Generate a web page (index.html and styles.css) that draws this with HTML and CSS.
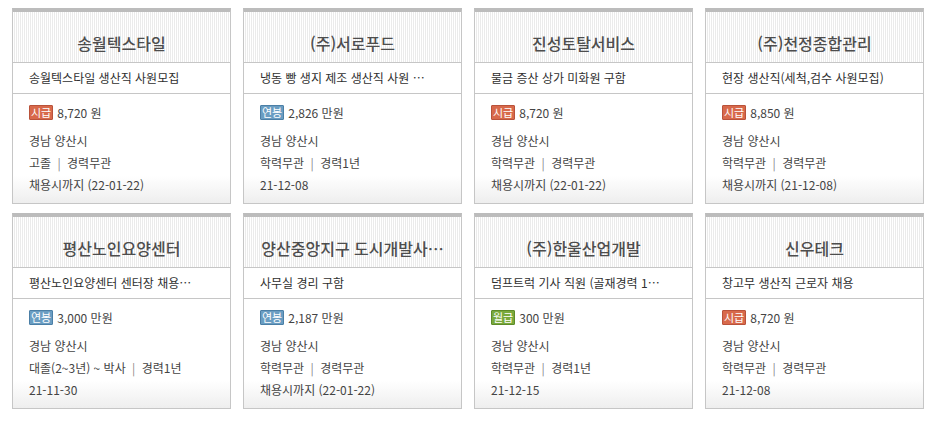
FILE: index.html
```html
<!DOCTYPE html>
<html lang="ko">
<head>
<meta charset="utf-8">
<title>채용정보</title>
<link rel="stylesheet" href="styles.css">
</head>
<body>
<div class="grid">
  <div class="card">
    <div class="card-head">송월텍스타일</div>
    <div class="card-sub">송월텍스타일 생산직 사원모집</div>
    <div class="card-body">
      <div class="pay"><span class="badge hourly">시급</span><span class="amount">8,720 원</span></div>
      <div class="line">경남 양산시</div>
      <div class="line">고졸 <span class="sep">|</span> 경력무관</div>
      <div class="line">채용시까지 (22-01-22)</div>
    </div>
  </div>
  <div class="card">
    <div class="card-head">(주)서로푸드</div>
    <div class="card-sub">냉동 빵 생지 제조 생산직 사원 …</div>
    <div class="card-body">
      <div class="pay"><span class="badge yearly">연봉</span><span class="amount">2,826 만원</span></div>
      <div class="line">경남 양산시</div>
      <div class="line">학력무관 <span class="sep">|</span> 경력1년</div>
      <div class="line">21-12-08</div>
    </div>
  </div>
  <div class="card">
    <div class="card-head">진성토탈서비스</div>
    <div class="card-sub">물금 증산 상가 미화원 구함</div>
    <div class="card-body">
      <div class="pay"><span class="badge hourly">시급</span><span class="amount">8,720 원</span></div>
      <div class="line">경남 양산시</div>
      <div class="line">학력무관 <span class="sep">|</span> 경력무관</div>
      <div class="line">채용시까지 (22-01-22)</div>
    </div>
  </div>
  <div class="card">
    <div class="card-head">(주)천정종합관리</div>
    <div class="card-sub">현장 생산직(세척,검수 사원모집)</div>
    <div class="card-body">
      <div class="pay"><span class="badge hourly">시급</span><span class="amount">8,850 원</span></div>
      <div class="line">경남 양산시</div>
      <div class="line">학력무관 <span class="sep">|</span> 경력무관</div>
      <div class="line">채용시까지 (21-12-08)</div>
    </div>
  </div>
  <div class="card">
    <div class="card-head">평산노인요양센터</div>
    <div class="card-sub">평산노인요양센터 센터장 채용…</div>
    <div class="card-body">
      <div class="pay"><span class="badge yearly">연봉</span><span class="amount">3,000 만원</span></div>
      <div class="line">경남 양산시</div>
      <div class="line">대졸(2~3년) ~ 박사 <span class="sep">|</span> 경력1년</div>
      <div class="line">21-11-30</div>
    </div>
  </div>
  <div class="card">
    <div class="card-head">양산중앙지구 도시개발사…</div>
    <div class="card-sub">사무실 경리 구함</div>
    <div class="card-body">
      <div class="pay"><span class="badge yearly">연봉</span><span class="amount">2,187 만원</span></div>
      <div class="line">경남 양산시</div>
      <div class="line">학력무관 <span class="sep">|</span> 경력무관</div>
      <div class="line">채용시까지 (22-01-22)</div>
    </div>
  </div>
  <div class="card">
    <div class="card-head">(주)한울산업개발</div>
    <div class="card-sub">덤프트럭 기사 직원 (골재경력 1…</div>
    <div class="card-body">
      <div class="pay"><span class="badge monthly">월급</span><span class="amount">300 만원</span></div>
      <div class="line">경남 양산시</div>
      <div class="line">학력무관 <span class="sep">|</span> 경력1년</div>
      <div class="line">21-12-15</div>
    </div>
  </div>
  <div class="card">
    <div class="card-head">신우테크</div>
    <div class="card-sub">창고무 생산직 근로자 채용</div>
    <div class="card-body">
      <div class="pay"><span class="badge hourly">시급</span><span class="amount">8,720 원</span></div>
      <div class="line">경남 양산시</div>
      <div class="line">학력무관 <span class="sep">|</span> 경력무관</div>
      <div class="line">21-12-08</div>
    </div>
  </div>
</div>
</body>
</html>
```
FILE: styles.css
```css
html, body {
  margin: 0;
  padding: 0;
  background: #fff;
}
body {
  font-family: "Noto Sans CJK KR", "Noto Sans", sans-serif;
  font-size: 12px;
  color: #444;
}
.grid {
  display: grid;
  grid-template-columns: repeat(4, 219px);
  column-gap: 12px;
  row-gap: 9px;
  padding: 8px 0 0 12px;
}
.card {
  border: 1px solid #c6c6c6;
  border-top: 4px solid #bcbcbc;
  display: flex;
  flex-direction: column;
}
.card-head {
  height: 51px;
  box-sizing: border-box;
  padding: 20px 10px 9px;
  line-height: 22px;
  font-size: 16px;
  font-weight: 500;
  color: #4d4d4d;
  text-align: center;
  white-space: nowrap;
  overflow: hidden;
  background: repeating-linear-gradient(90deg, #ffffff 0, #ffffff 1px, #ebebeb 1px, #ebebeb 2px);
  border-bottom: 1px solid #c6c6c6;
}
.card-sub {
  height: 30px;
  line-height: 30px;
  padding: 0 16px;
  font-size: 12px;
  font-weight: 400;
  color: #2f2f2f;
  white-space: nowrap;
  overflow: hidden;
  border-bottom: 1px solid #c6c6c6;
}
.card-body {
  height: 109px;
  box-sizing: border-box;
  padding: 7px 16px 7px;
  background: linear-gradient(to bottom, #ffffff 0, #ffffff 75%, #eeeeee 100%);
}
.pay {
  display: flex;
  align-items: center;
  gap: 4px;
  height: 22px;
  margin-bottom: 7px;
}
.badge {
  display: inline-block;
  height: 13px;
  line-height: 13px;
  padding: 0 1px;
  font-size: 11px;
  color: #fff;
  border: 1px solid;
  border-radius: 1px;
}
.badge.hourly {
  background: #d8694b;
  border-color: #b9523a;
}
.badge.yearly {
  background: #6a9dc2;
  border-color: #4b7fa6;
}
.badge.monthly {
  background: #79a93c;
  border-color: #5e8b28;
}
.amount {
  color: #444;
  font-size: 12px;
}
.line {
  height: 22px;
  line-height: 22px;
  color: #444;
  white-space: nowrap;
}
.sep {
  color: #888;
  padding: 0 3px;
}
```
